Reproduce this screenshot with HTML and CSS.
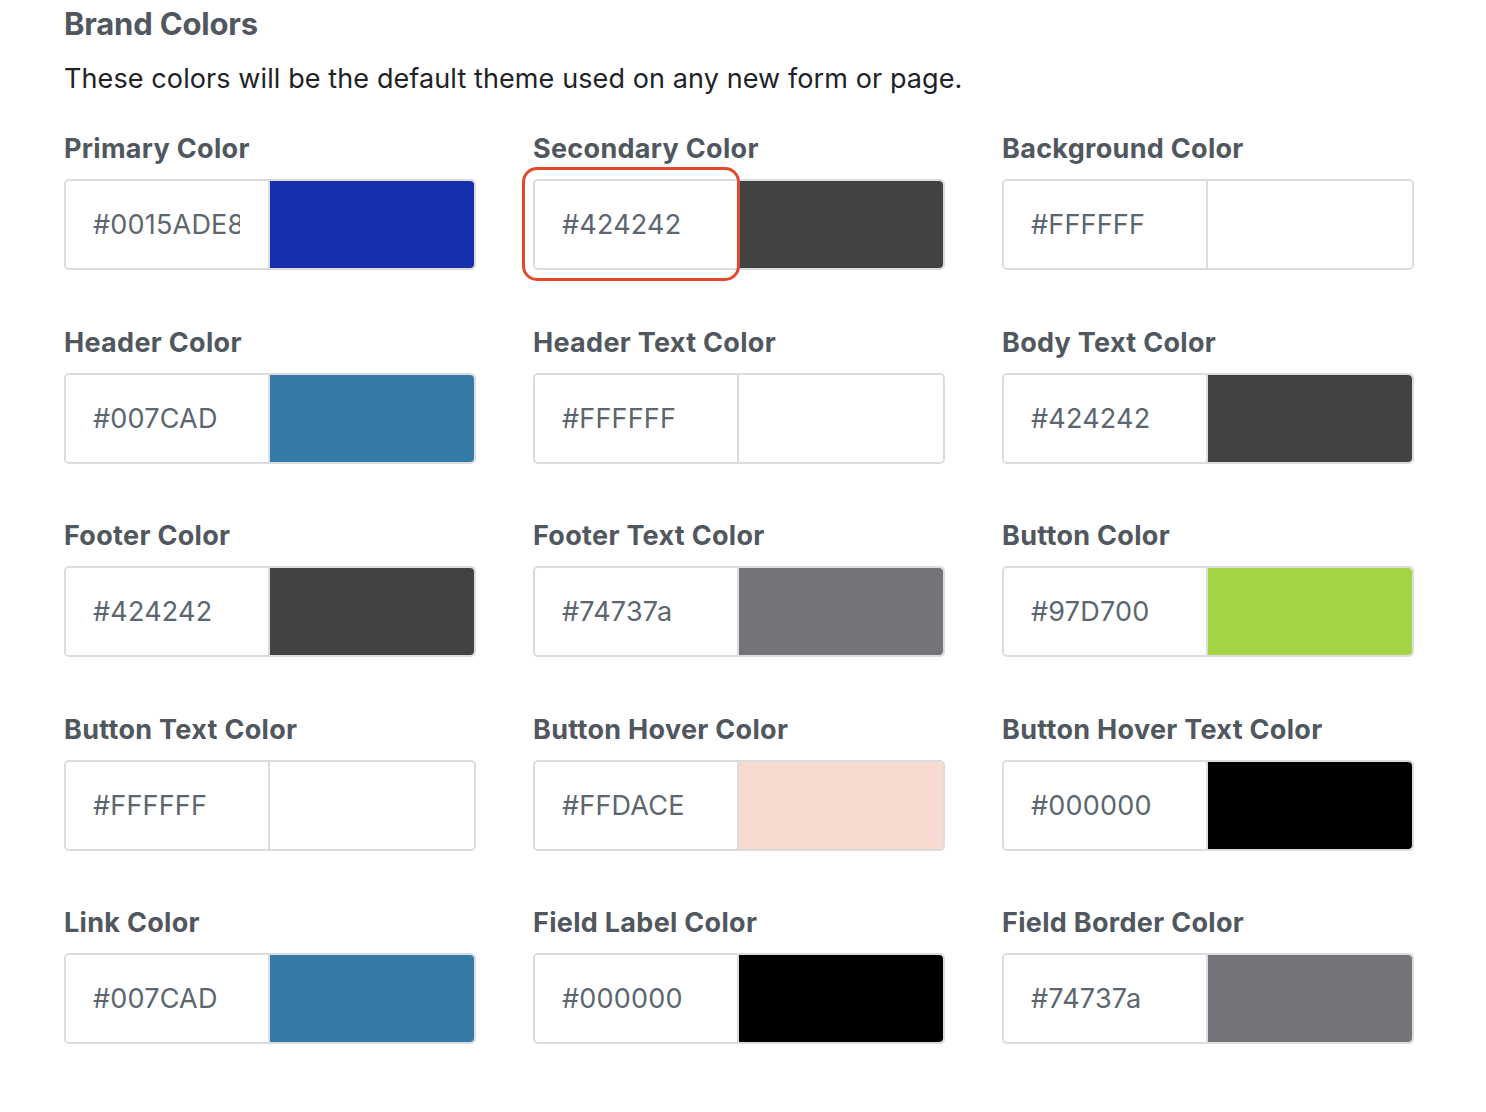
FILE: index.html
```html
<!DOCTYPE html>
<html>
<head>
<meta charset="utf-8">
<link rel="stylesheet" href="styles.css">
</head>
<body>
<section class="brand">
  <h2 class="title">Brand Colors</h2>
  <p class="desc">These colors will be the default theme used on any new form or page.</p>
  <div class="grid">
    <div class="field"><label class="label">Primary Color</label><div class="picker"><input class="hex" value="#0015ADE8"><span class="swatch" style="background:#1630AD"></span></div></div>
    <div class="field"><label class="label">Secondary Color</label><div class="picker highlighted"><input class="hex" value="#424242"><span class="swatch" style="background:#424242"></span><span class="ring"></span></div></div>
    <div class="field"><label class="label">Background Color</label><div class="picker"><input class="hex" value="#FFFFFF"><span class="swatch" style="background:#FFFFFF"></span></div></div>

    <div class="field"><label class="label">Header Color</label><div class="picker"><input class="hex" value="#007CAD"><span class="swatch" style="background:#347BA8"></span></div></div>
    <div class="field"><label class="label">Header Text Color</label><div class="picker"><input class="hex" value="#FFFFFF"><span class="swatch" style="background:#FFFFFF"></span></div></div>
    <div class="field"><label class="label">Body Text Color</label><div class="picker"><input class="hex" value="#424242"><span class="swatch" style="background:#424242"></span></div></div>

    <div class="field"><label class="label">Footer Color</label><div class="picker"><input class="hex" value="#424242"><span class="swatch" style="background:#424242"></span></div></div>
    <div class="field"><label class="label">Footer Text Color</label><div class="picker"><input class="hex" value="#74737a"><span class="swatch" style="background:#74737a"></span></div></div>
    <div class="field"><label class="label">Button Color</label><div class="picker"><input class="hex" value="#97D700"><span class="swatch" style="background:#A3D444"></span></div></div>

    <div class="field"><label class="label">Button Text Color</label><div class="picker"><input class="hex" value="#FFFFFF"><span class="swatch" style="background:#FFFFFF"></span></div></div>
    <div class="field"><label class="label">Button Hover Color</label><div class="picker"><input class="hex" value="#FFDACE"><span class="swatch" style="background:#F7DAD0"></span></div></div>
    <div class="field"><label class="label">Button Hover Text Color</label><div class="picker"><input class="hex" value="#000000"><span class="swatch" style="background:#000000"></span></div></div>

    <div class="field"><label class="label">Link Color</label><div class="picker"><input class="hex" value="#007CAD"><span class="swatch" style="background:#347BA8"></span></div></div>
    <div class="field"><label class="label">Field Label Color</label><div class="picker"><input class="hex" value="#000000"><span class="swatch" style="background:#000000"></span></div></div>
    <div class="field"><label class="label">Field Border Color</label><div class="picker"><input class="hex" value="#74737a"><span class="swatch" style="background:#74737a"></span></div></div>
  </div>
</section>
</body>
</html>
```

FILE: styles.css
```css
html, body {
  margin: 0;
  padding: 0;
  background: #ffffff;
}
body {
  font-family: Inter, "Noto Sans", "Liberation Sans", sans-serif;
}
.brand {
  padding: 4px 0 0 64px;
  width: 1349px;
}
.title {
  margin: 0;
  font-size: 31px;
  line-height: 40px;
  font-weight: 700;
  color: #50575e;
  letter-spacing: -0.2px;
}
.desc {
  margin: 18px 0 0 0;
  font-size: 27px;
  line-height: 34px;
  color: #1d2327;
  letter-spacing: 0.1px;
}
.grid {
  display: grid;
  grid-template-columns: repeat(3, 412px);
  column-gap: 57px;
  row-gap: 55.5px;
  margin-top: 36px;
}
.field {
  display: flex;
  flex-direction: column;
}
.label {
  font-size: 27px;
  line-height: 34px;
  font-weight: 700;
  color: #50575e;
  letter-spacing: 0.3px;
  margin-bottom: 13px;
}
.picker {
  position: relative;
  display: flex;
  height: 91px;
  box-sizing: border-box;
  border: 2px solid #dcdcde;
  border-radius: 5px;
}
.hex {
  width: 204px;
  flex: none;
  box-sizing: border-box;
  border: none;
  border-right: 2px solid #dcdcde;
  border-radius: 4px 0 0 4px;
  padding: 0 28px 0 27px;
  margin: 0;
  font-family: inherit;
  font-size: 27px;
  letter-spacing: 0.2px;
  color: #5b6670;
  background: #fff;
  outline: none;
}
.swatch {
  flex: 1;
  border-radius: 0 4px 4px 0;
}
.ring {
  position: absolute;
  left: -13px;
  top: -14px;
  width: 218px;
  height: 114px;
  box-sizing: border-box;
  border: 3.5px solid #e5472d;
  border-radius: 15px;
  pointer-events: none;
}
```
